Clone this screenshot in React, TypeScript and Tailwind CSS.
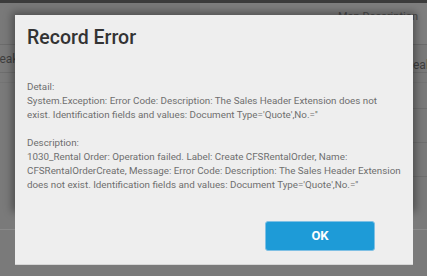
export default function App() {
  return (
    <div className="relative h-[276px] w-[427px] overflow-hidden bg-[#7a7a7a] font-['Roboto',sans-serif]">
      {/* page behind the overlay */}
      <div className="h-[3px] bg-[#3b3b3b]" />
      <div className="flex h-[42px] border-b border-[#6c6c6c]">
        <div className="w-[200px] bg-[#797979]" />
        <div className="flex-1 bg-[#7e7e7e] pl-[138px] pt-[6px] text-[11px] text-[#4a4a4a]">Man Description</div>
      </div>
      <div className="flex h-[28px] items-center border-b border-[#6e6e6e] text-[12px] text-[#3f3f3f]">
        <span className="-ml-[12px]">Break</span>
        <span className="ml-auto mt-[12px] w-[14px] overflow-hidden">eak</span>
      </div>
      <div className="h-[10px] border-b border-[#747474]" />
      <div className="ml-auto h-[26px] w-[20px] border-b border-[#6f6f6f]" />
      <div className="ml-auto h-[34px] w-[20px] border-b border-[#6f6f6f]" />
      <div className="ml-auto h-[34px] w-[20px] border-b border-[#6f6f6f]" />
      <div className="mt-[52px] flex h-[12px] border-t border-[#8a8a8a]">
        <div className="w-[215px]" />
        <div className="w-[26px] border-l border-r border-[#6a6a6a] bg-[#757575]" />
        <div className="pl-[9px] pt-[4px] text-[11px] leading-none text-[#3a3a3a]">Posted/Tracking</div>
      </div>

      {/* shadow behind dialog */}
      <div className="absolute left-[15px] top-[15px] h-[194px] w-[398px] shadow-[0_0_8px_3px_rgba(0,0,0,0.35)]" />

      {/* dialog */}
      <div className="absolute left-[15px] top-[15px] flex h-[250px] w-[398px] flex-col border-b border-[#d6d6d6] bg-[#eeeeee] pl-[12px] pr-[6px]">
        <h1 className="mt-[9px] text-[19.5px] font-medium leading-[28px] text-[#333333]">Record Error</h1>
        <div className="mt-[28px] whitespace-nowrap text-[9.8px] leading-[14px] text-[#6e6e6e]">
          <p>Detail:</p>
          <p>
            System.Exception: Error Code: Description: The Sales Header Extension does not
            <br />
            exist. Identification fields and values: Document Type='Quote',No.=''
          </p>
          <p className="mt-[14px]">Description:</p>
          <p>
            1030_Rental Order: Operation failed. Label: Create CFSRentalOrder, Name:
            <br />
            CFSRentalOrderCreate, Message: Error Code: Description: The Sales Header Extension
            <br />
            does not exist. Identification fields and values: Document Type='Quote',No.=''
          </p>
        </div>
        <div className="mt-auto mb-[13px] flex justify-end pr-[32px]">
          <button className="flex h-[30px] w-[110px] items-center justify-center rounded-[3px] border border-[#7fc0e4] bg-[#1e9bd7] text-[13px] font-bold text-white">
            OK
          </button>
        </div>
      </div>
    </div>
  )
}
